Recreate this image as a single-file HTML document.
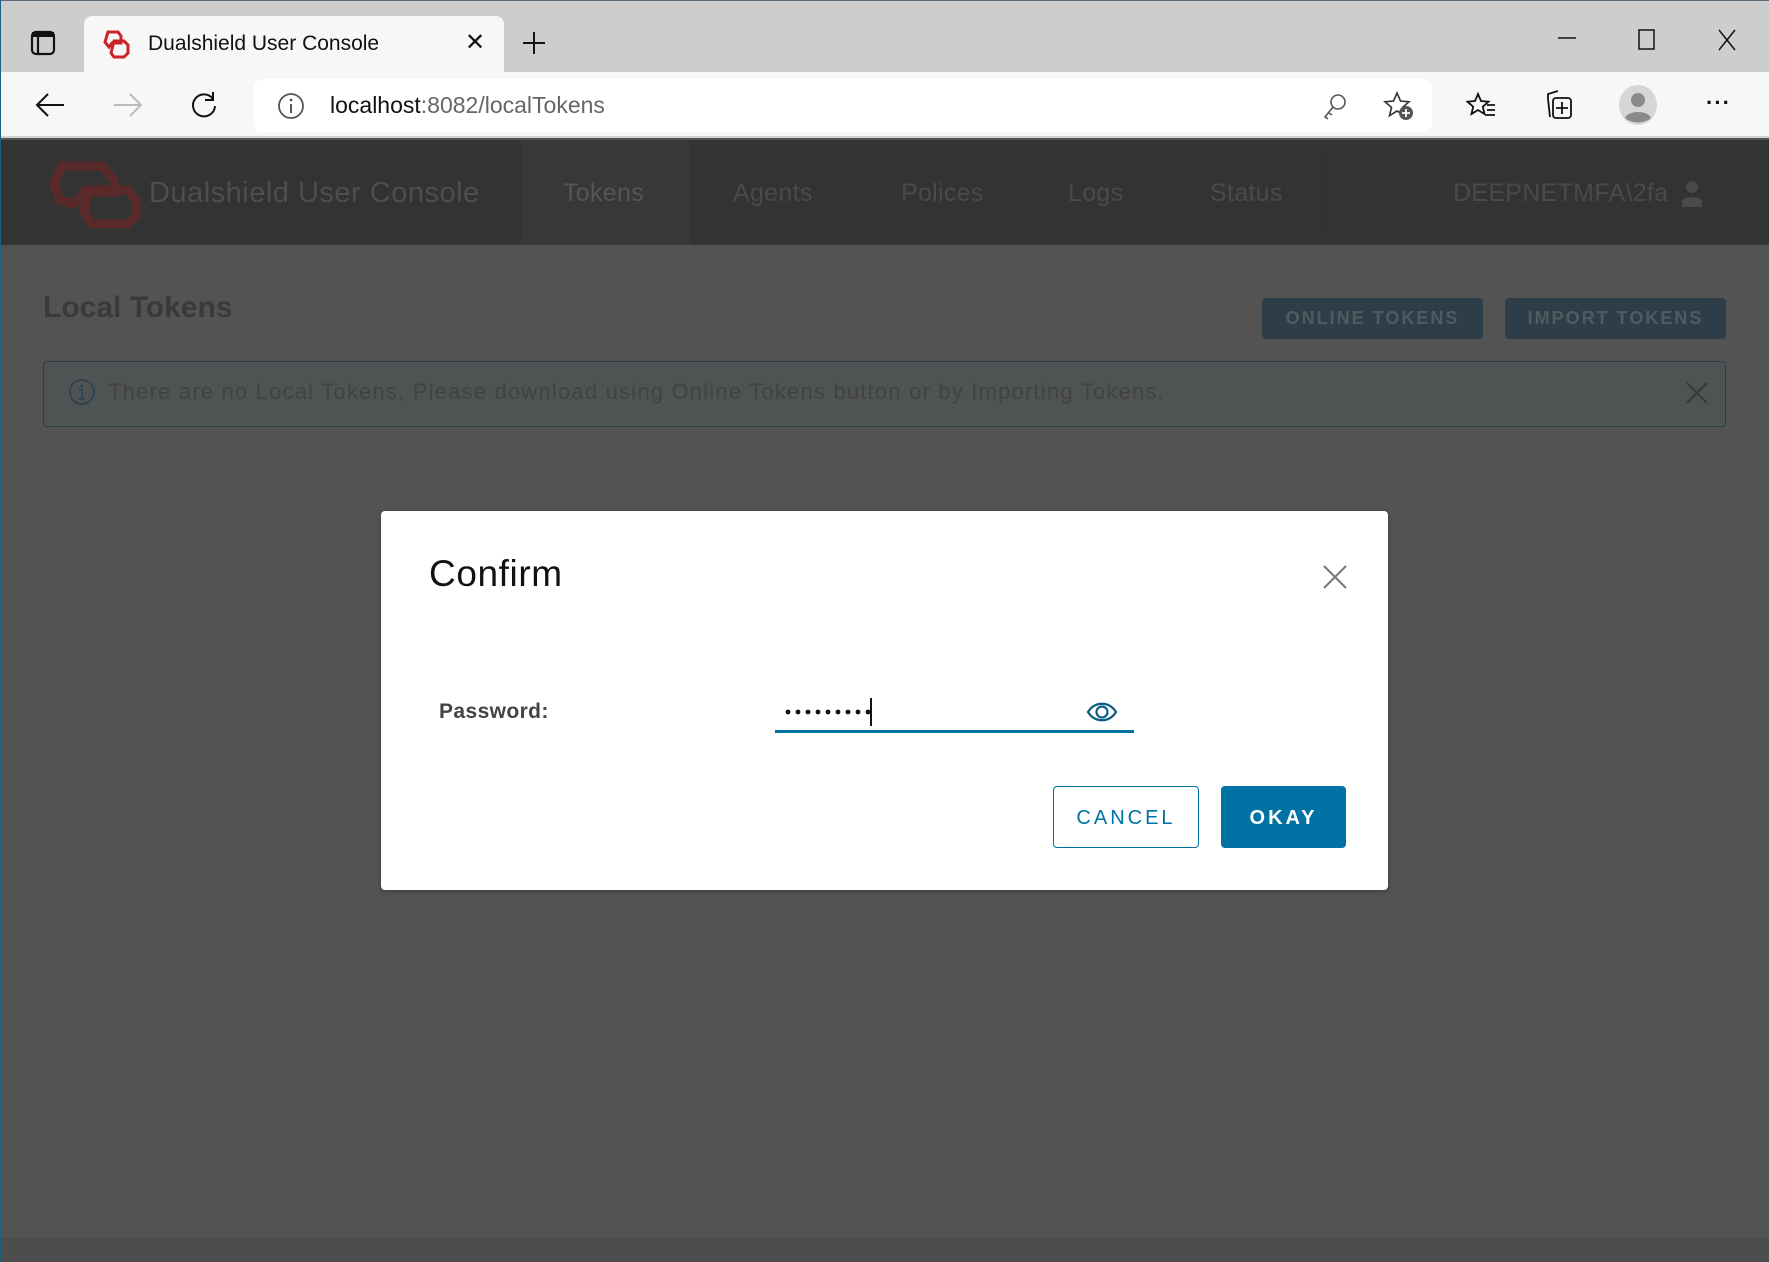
<!DOCTYPE html>
<html><head><meta charset="utf-8"><style>
*{margin:0;padding:0;box-sizing:border-box}
body{width:1769px;height:1262px;overflow:hidden;font-family:"Liberation Sans",sans-serif;background:#535353;position:relative}
.a{position:absolute}
.t{white-space:nowrap;line-height:1}
</style></head><body>
<!-- tab bar -->
<div class="a" style="left:0;top:0;width:1769px;height:72px;background:#cdcdcd;border-top:1px solid #5a6a78"></div>
<div class="a" style="left:0;top:0;width:1px;height:1262px;background:#1f5f80;z-index:5"></div>
<svg class="a" style="left:30px;top:30px" width="26" height="26" viewBox="0 0 26 26"><rect x="2" y="2" width="22" height="22" rx="4" fill="none" stroke="#111" stroke-width="2.2"/><rect x="2" y="2" width="22" height="5" fill="#111"/><line x1="8" y1="6" x2="8" y2="24" stroke="#111" stroke-width="2.2"/></svg>
<div class="a" style="left:84px;top:16px;width:420px;height:58px;background:#f7f7f7;border-radius:8px 8px 0 0"></div>
<svg class="a" style="left:102px;top:29px" width="30" height="30" viewBox="0 0 28 30"><path d="M5 3h10l3 4v7H9l-3 4-4-5z" fill="none" stroke="#cc2229" stroke-width="3"/><path d="M11 12h10l4 4v8l-4 4H11l-3-4z" fill="none" stroke="#cc2229" stroke-width="3"/></svg>
<div class="a t" style="left:148px;top:33px;font-size:21px;color:#111">Dualshield User Console</div>
<div class="a t" style="left:465px;top:31px;font-size:24px;color:#111">✕</div>
<svg class="a" style="left:521px;top:30px" width="26" height="26"><path d="M13 2v22M2 13h22" stroke="#111" stroke-width="2"/></svg>
<svg class="a" style="left:1556px;top:28px" width="190" height="24"><path d="M2 10h18" stroke="#111" stroke-width="1.5"/><rect x="83" y="2" width="15" height="19" fill="none" stroke="#111" stroke-width="1.5"/><path d="M163 2l16 20M179 2l-16 20" stroke="#111" stroke-width="1.5"/></svg>
<!-- toolbar -->
<div class="a" style="left:0;top:72px;width:1769px;height:66px;background:#f7f7f7;border-bottom:2px solid #d2d2d2"></div>
<svg class="a" style="left:34px;top:92px" width="32" height="26"><path d="M30 13H3M14 2L3 13l11 11" fill="none" stroke="#111" stroke-width="2"/></svg>
<svg class="a" style="left:112px;top:92px" width="32" height="26"><path d="M2 13h27M18 2l11 11-11 11" fill="none" stroke="#bbb" stroke-width="2"/></svg>
<svg class="a" style="left:189px;top:90px" width="30" height="30"><path d="M24 9A11 11 0 1 0 26 16" fill="none" stroke="#111" stroke-width="2"/><path d="M24 2v8h-8" fill="none" stroke="#111" stroke-width="2"/></svg>
<div class="a" style="left:254px;top:79px;width:1178px;height:53px;background:#fff;border-radius:8px"></div>
<svg class="a" style="left:277px;top:92px" width="28" height="28"><circle cx="14" cy="14" r="12" fill="none" stroke="#555" stroke-width="1.8"/><path d="M14 12v9" stroke="#555" stroke-width="2"/><circle cx="14" cy="8" r="1.4" fill="#555"/></svg>
<div class="a t" style="left:330px;top:94px;font-size:23px;color:#111">localhost<span style="color:#666">:8082/localTokens</span></div>
<svg class="a" style="left:1322px;top:93px" width="26" height="28"><circle cx="16" cy="9" r="7" fill="none" stroke="#555" stroke-width="1.6"/><path d="M11 14L3 24l3 2M7 20l3 2" fill="none" stroke="#555" stroke-width="1.6"/></svg>
<svg class="a" style="left:1383px;top:90px" width="32" height="32"><path d="M14 3l3.5 8 8.5.8-6.5 5.6 2 8.4L14 21l-7.5 4.8 2-8.4L2 11.8l8.5-.8z" fill="none" stroke="#333" stroke-width="1.6"/><circle cx="23" cy="23" r="7" fill="#555"/><path d="M23 19v8M19 23h8" stroke="#fff" stroke-width="1.8"/></svg>
<svg class="a" style="left:1466px;top:91px" width="32" height="30"><path d="M12 3l3 7 7.5.7-5.7 5 1.7 7.3L12 19l-6.5 4 1.7-7.3-5.7-5L9 10z" fill="none" stroke="#111" stroke-width="1.8"/><path d="M21 14h8M21 19h8M19 24h10" stroke="#111" stroke-width="1.8"/></svg>
<svg class="a" style="left:1543px;top:89px" width="32" height="34"><path d="M5 10V5l10-3M5 10l2 18" fill="none" stroke="#111" stroke-width="1.8"/><rect x="10" y="9" width="18" height="20" rx="3" fill="none" stroke="#111" stroke-width="1.8"/><path d="M19 13v12M13 19h12" stroke="#111" stroke-width="1.8"/></svg>
<svg class="a" style="left:1619px;top:85px" width="38" height="40"><ellipse cx="19" cy="20" rx="19" ry="20" fill="#d6d6d6"/><circle cx="19" cy="15" r="7" fill="#8a8a8a"/><path d="M6 33c3-8 23-8 26 0c-7 6-19 6-26 0z" fill="#8a8a8a"/></svg>
<div class="a t" style="left:1706px;top:92px;font-size:22px;color:#111;letter-spacing:1px;font-weight:bold">···</div>
<!-- nav -->
<div class="a" style="left:1px;top:140px;width:1768px;height:105px;background:#333"></div>
<div class="a" style="left:521px;top:140px;width:169px;height:105px;background:#383838"></div>
<div class="a" style="left:1324px;top:158px;width:1px;height:72px;background:#2f2f2f"></div>
<svg class="a" style="left:50px;top:160px" width="92" height="68" viewBox="0 0 92 68"><path d="M12 6h40l12 14v12H34l-10 12-14-4L4 24z" fill="none" stroke="#5a2a2b" stroke-width="9"/><path d="M38 30h40l8 10v16l-8 8H42l-8-12z" fill="none" stroke="#5a2a2b" stroke-width="9"/></svg>
<div class="a t" style="left:149px;top:179px;font-size:29px;color:#4e4e4e;letter-spacing:0.5px">Dualshield User Console</div>
<div class="a t" style="left:563px;top:181px;font-size:25px;color:#555;letter-spacing:0.3px">Tokens</div>
<div class="a t" style="left:733px;top:181px;font-size:25px;color:#4a4a4a;letter-spacing:0.3px">Agents</div>
<div class="a t" style="left:901px;top:181px;font-size:25px;color:#4a4a4a;letter-spacing:0.3px">Polices</div>
<div class="a t" style="left:1068px;top:181px;font-size:25px;color:#4a4a4a;letter-spacing:0.3px">Logs</div>
<div class="a t" style="left:1210px;top:181px;font-size:25px;color:#4a4a4a;letter-spacing:0.3px">Status</div>
<div class="a t" style="left:1453px;top:181px;font-size:25px;color:#4a4a4a;letter-spacing:0.3px">DEEPNETMFA\2fa</div>
<svg class="a" style="left:1681px;top:180px" width="22" height="28"><circle cx="11" cy="7" r="6" fill="#4a4a4a"/><path d="M1 27v-6c0-5 20-5 20 0v6z" fill="#4a4a4a"/></svg>
<!-- content -->
<div class="a t" style="left:43px;top:293px;font-size:30px;color:#3a3a3a;font-weight:bold">Local Tokens</div>
<div class="a t" style="left:1262px;top:298px;width:221px;height:41px;background:#2e3e48;border-radius:4px;color:#4f5b61;font-size:18px;letter-spacing:2px;text-align:center;line-height:41px;font-weight:bold">ONLINE TOKENS</div>
<div class="a t" style="left:1505px;top:298px;width:221px;height:41px;background:#2e3e48;border-radius:4px;color:#4f5b61;font-size:18px;letter-spacing:2px;text-align:center;line-height:41px;font-weight:bold">IMPORT TOKENS</div>
<div class="a" style="left:43px;top:361px;width:1683px;height:66px;background:#4f5354;border:1.5px solid #2e3e48;border-radius:4px"></div>
<svg class="a" style="left:68px;top:378px" width="28" height="28"><circle cx="14" cy="14" r="12" fill="none" stroke="#2e4452" stroke-width="2"/><path d="M14 12v9M11 21h6M11 12h3" stroke="#2e4452" stroke-width="2"/><circle cx="14" cy="8" r="1.5" fill="#2e4452"/></svg>
<div class="a t" style="left:108px;top:381px;font-size:22px;color:#424242;letter-spacing:1.2px">There are no Local Tokens, Please download using Online Tokens button or by Importing Tokens.</div>
<svg class="a" style="left:1686px;top:382px" width="22" height="22"><path d="M1 1l20 20M21 1L1 21" stroke="#383838" stroke-width="2"/></svg>
<div class="a" style="left:1px;top:1240px;width:1768px;height:22px;background:#4d4d4d;box-shadow:0 -1px 2px rgba(0,0,0,.15)"></div>
<!-- modal -->
<div class="a" style="left:381px;top:511px;width:1007px;height:379px;background:#fff;border-radius:4px;box-shadow:0 1px 4px rgba(0,0,0,.3)"></div>
<div class="a t" style="left:429px;top:555px;font-size:37px;color:#111;letter-spacing:0.6px">Confirm</div>
<svg class="a" style="left:1323px;top:565px" width="24" height="24"><path d="M1 1l22 22M23 1L1 23" stroke="#777" stroke-width="2"/></svg>
<div class="a t" style="left:439px;top:701px;font-size:21px;color:#444;font-weight:bold;letter-spacing:0.4px">Password:</div>
<svg class="a" style="left:784px;top:706px" width="90" height="12"><g fill="#111"><circle cx="4" cy="6" r="2.4"/><circle cx="14" cy="6" r="2.4"/><circle cx="24" cy="6" r="2.4"/><circle cx="34" cy="6" r="2.4"/><circle cx="44" cy="6" r="2.4"/><circle cx="54" cy="6" r="2.4"/><circle cx="64" cy="6" r="2.4"/><circle cx="74" cy="6" r="2.4"/><circle cx="84" cy="6" r="2.4"/></g></svg>
<div class="a" style="left:870px;top:698px;width:2px;height:28px;background:#111"></div>
<svg class="a" style="left:1086px;top:700px" width="32" height="24"><path d="M2 12C9 1 23 1 30 12 23 23 9 23 2 12z" fill="none" stroke="#0e5d85" stroke-width="2.2"/><circle cx="16" cy="12" r="5.5" fill="none" stroke="#0e5d85" stroke-width="2.2"/></svg>
<div class="a" style="left:775px;top:730px;width:359px;height:3px;background:#0072a3"></div>
<div class="a t" style="left:1053px;top:786px;width:146px;height:62px;border:1px solid #0072a3;border-radius:4px;color:#0072a3;font-size:20px;letter-spacing:3px;text-align:center;line-height:62px">CANCEL</div>
<div class="a t" style="left:1221px;top:786px;width:125px;height:62px;background:#0072a3;border-radius:4px;color:#fff;font-size:20px;letter-spacing:3px;text-align:center;line-height:64px;font-weight:bold">OKAY</div>
</body></html>
